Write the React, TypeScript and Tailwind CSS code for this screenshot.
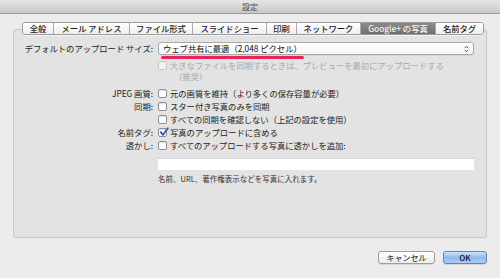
import React from 'react'

const TABS: { label: string; w: string; active?: boolean }[] = [
  { label: '全般',           w: 'w-[30px]' },
  { label: 'メール アドレス', w: 'w-[76px]' },
  { label: 'ファイル形式',    w: 'w-[63px]' },
  { label: 'スライドショー',  w: 'w-[74px]' },
  { label: '印刷',           w: 'w-[30px]' },
  { label: 'ネットワーク',    w: 'w-[64px]' },
  { label: 'Google+ の写真', w: 'w-[75px]', active: true },
  { label: '名前タグ',        w: 'w-[48px]' },
]

function Checkbox({ checked, disabled }: { checked?: boolean; disabled?: boolean }) {
  return (
    <span
      className={`relative block w-[9px] h-[9px] shrink-0 rounded-[2px] border ${
        disabled ? 'border-[#c8c8c8] bg-[#f2f2f2]' : 'border-[#8e8e8e] bg-white shadow-[inset_0_1px_1px_rgba(0,0,0,0.12)]'
      }`}
    >
      {checked && (
        <svg viewBox="0 0 10 10" className="absolute left-[0px] top-[-2px] w-[10px] h-[10px]">
          <path d="M1.8 5.2 L4 7.8 L8.8 1.2" fill="none" stroke="#2a5fb8" strokeWidth="1.9" strokeLinecap="round" strokeLinejoin="round" />
        </svg>
      )}
    </span>
  )
}

function Row({ label, children }: { label?: string; children: React.ReactNode }) {
  return (
    <>
      <div className="text-right text-[#222] leading-[13px] h-[13px]">{label ?? ''}</div>
      <div className="flex items-center gap-[3px] h-[13px] leading-[13px] text-[#222]">{children}</div>
    </>
  )
}

export default function App() {
  return (
    <div
      className="w-[500px] h-[278px] bg-[#ececec] flex flex-col overflow-hidden"
      style={{ fontFamily: '"Noto Sans CJK JP", "Liberation Sans", sans-serif' }}
    >
      {/* Title bar */}
      <div className="h-[14px] shrink-0 bg-gradient-to-b from-[#e6e6e6] to-[#c9c9c9] border-b border-[#999999] flex items-center justify-center">
        <span className="text-[8px] leading-none text-[#4a4a4a]">設定</span>
      </div>

      <div className="flex flex-col px-[13px] pt-[8px]">
        {/* Tabs */}
        <div className="relative z-10 ml-[9px] flex h-[13px] w-fit rounded-[3px] border border-[#9a9a9a] overflow-hidden shadow-[0_1px_0_rgba(255,255,255,0.6)]">
          {TABS.map((t, i) => (
            <div
              key={t.label}
              className={`${t.w} flex items-center justify-center text-[8.3px] leading-none font-medium ${
                i > 0 ? 'border-l border-[#a8a8a8]' : ''
              } ${
                t.active
                  ? 'bg-gradient-to-b from-[#8c8c8c] to-[#6f6f6f] text-[#f4f4f4]'
                  : 'bg-gradient-to-b from-[#ffffff] to-[#eeeeee] text-[#1e1e1e]'
              }`}
            >
              {t.label}
            </div>
          ))}
        </div>

        {/* Tab box */}
        <div className="-mt-[6px] h-[209px] rounded-[3px] border border-[#c6c6c6] bg-[#e3e3e3] pt-[12px]">
          <div className="grid grid-cols-[139px_316px] gap-x-[5px] text-[8.3px]">
            {/* upload size */}
            <div className="text-right text-[#222] leading-[13px] h-[13px]">デフォルトのアップロード サイズ:</div>
            <div className="relative h-[13px] rounded-[3px] border border-[#a9a9a9] bg-gradient-to-b from-white to-[#f7f7f7] flex items-center pl-[4px] pr-[4px] shadow-[0_1px_0_rgba(0,0,0,0.06)]">
              <span className="leading-none text-[#111]">ウェブ共有に最適（2,048 ピクセル）</span>
              <svg viewBox="0 0 6 9" className="ml-auto w-[5px] h-[8px]">
                <path d="M1 3.4 L3 1.2 L5 3.4" fill="none" stroke="#444" strokeWidth="1.1" />
                <path d="M1 5.6 L3 7.8 L5 5.6" fill="none" stroke="#444" strokeWidth="1.1" />
              </svg>
              <span className="absolute left-[2px] top-[13px] w-[143px] h-[2.5px] rounded-full bg-[#e9245c]" />
            </div>

            {/* disabled option */}
            <div className="mt-[5px]" />
            <div className="mt-[5px] flex gap-[2px] text-[#a9a9a9] leading-[11px]">
              <div className="pt-[1px]"><Checkbox disabled /></div>
              <div className="pl-[1px]">
                <div>大きなファイルを同期するときは、プレビューを最初にアップロードする</div>
                <div className="pl-[4px]">（推奨）</div>
              </div>
            </div>

            <div className="h-[5px]" />
            <div className="h-[5px]" />

            <Row label="JPEG 画質:">
              <Checkbox />
              <span>元の画質を維持（より多くの保存容量が必要）</span>
            </Row>
            <Row label="同期:">
              <Checkbox />
              <span>スター付き写真のみを同期</span>
            </Row>
            <Row>
              <Checkbox />
              <span>すべての同期を確認しない（上記の設定を使用）</span>
            </Row>
            <Row label="名前タグ:">
              <Checkbox checked />
              <span>写真のアップロードに含める</span>
            </Row>
            <Row label="透かし:">
              <Checkbox />
              <span>すべてのアップロードする写真に透かしを追加:</span>
            </Row>

            <div />
            <div className="mt-[6px] h-[12px] bg-white border-t border-[#d6d6d6]" />

            <div />
            <div className="mt-[3px] text-[7.5px] leading-[12px] text-[#333]">名前、URL、著作権表示などを写真に入れます。</div>
          </div>
        </div>

        {/* Buttons */}
        <div className="mt-[13px] flex justify-end gap-[8px]">
          <button className="w-[57px] h-[13px] rounded-[3px] border border-[#9d9d9d] bg-gradient-to-b from-white to-[#ececec] text-[8px] leading-none text-[#111] shadow-[0_1px_0_rgba(0,0,0,0.08)]">
            キャンセル
          </button>
          <button className="w-[44px] h-[13px] rounded-[3px] border border-[#5a86c2] bg-gradient-to-b from-[#cfe2f8] via-[#8fbaf0] to-[#a9cdf7] text-[8px] leading-none font-medium text-[#111] shadow-[0_1px_0_rgba(0,0,0,0.1)]">
            OK
          </button>
        </div>
      </div>
    </div>
  )
}
